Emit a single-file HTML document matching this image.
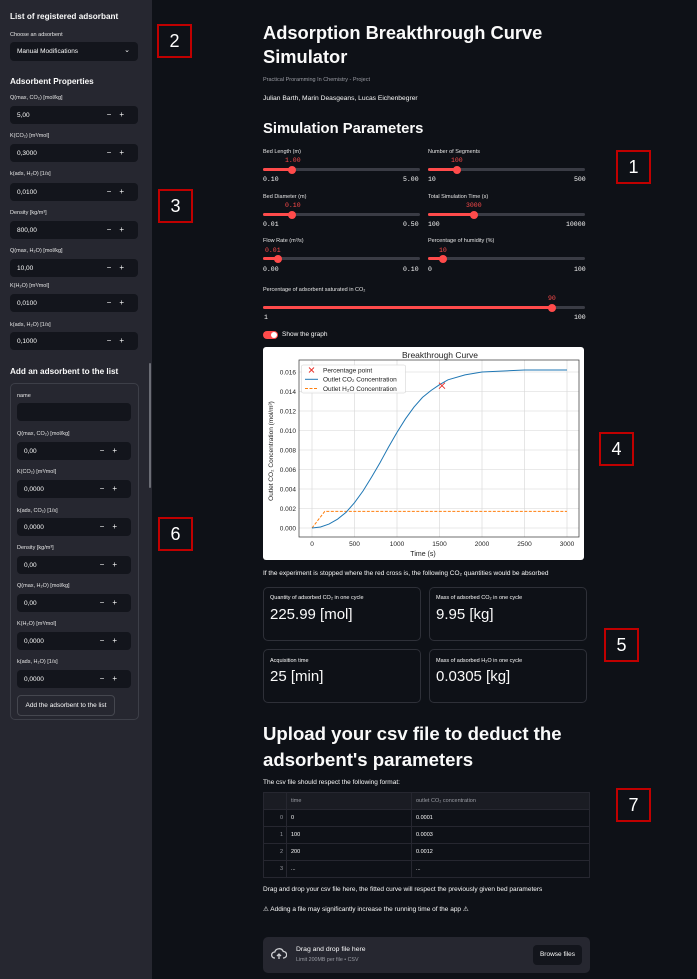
<!DOCTYPE html>
<html><head><meta charset="utf-8"><style>
*{box-sizing:border-box;margin:0;padding:0}
body{width:697px;height:979px;background:#0e1117;font-family:"Liberation Sans",sans-serif;color:#fafafa;position:relative;overflow:hidden}
.a{position:absolute;white-space:nowrap}
#sb{position:absolute;left:0;top:0;width:152px;height:979px;background:#262730}
.h{font-weight:bold;font-size:8.2px}
.l{font-size:5.5px;color:#e6e6e6}
.in{position:absolute;background:#13151c;border-radius:4px;height:18px;font-size:6.5px;color:#fafafa;padding:6px 0 0 7px}
.in .pm{position:absolute;right:6px;top:4px;font-size:8px;letter-spacing:8px}
.sl{position:absolute;height:3px;background:#3a3c45;border-radius:2px}
.sl i{position:absolute;left:0;top:0;height:3px;background:#ff4b4b;border-radius:2px}
.sl b{position:absolute;top:-2.5px;width:8px;height:8px;border-radius:50%;background:#ff4b4b;margin-left:-4px}
.v{position:absolute;font-family:"Liberation Mono",monospace;font-size:6.5px;color:#ff4b4b;white-space:nowrap}
.mm{position:absolute;font-family:"Liberation Mono",monospace;font-size:6.5px;color:#fafafa;white-space:nowrap}
.box{position:absolute;border:1px solid #2e3038;border-radius:5px}
.ann{position:absolute;width:35px;height:34px;border:2px solid #c00000;background:#0e1117;color:#fff;font-size:18px;text-align:center;line-height:30px}
td{font-size:5.5px;color:#fafafa;border-top:1px solid #262730;border-left:1px solid #262730;height:17px;padding-left:4px}
</style></head><body>
<div id="sb"></div>
<div class="a h" style="left:10px;top:12px">List of registered adsorbant</div>
<div class="a l" style="left:10px;top:32px">Choose an adsorbent</div>
<div class="in" style="left:10px;top:42px;width:128px;height:19px;padding-left:7px">Manual Modifications<span style="position:absolute;right:8px;top:4px;font-size:7px">⌄</span></div>
<div class="a h" style="left:10px;top:77px">Adsorbent Properties</div>
<div class="a l" style="left:10px;top:95px">Q(max, CO₂) [mol/kg]</div>
<div class="in" style="left:10px;top:106px;width:128px">5,00<span class="pm">−+</span></div>
<div class="a l" style="left:10px;top:133px">K(CO₂) [m³/mol]</div>
<div class="in" style="left:10px;top:144px;width:128px">0,3000<span class="pm">−+</span></div>
<div class="a l" style="left:10px;top:171px">k(ads, H₂O) [1/s]</div>
<div class="in" style="left:10px;top:183px;width:128px">0,0100<span class="pm">−+</span></div>
<div class="a l" style="left:10px;top:210px">Density [kg/m³]</div>
<div class="in" style="left:10px;top:221px;width:128px">800,00<span class="pm">−+</span></div>
<div class="a l" style="left:10px;top:248px">Q(max, H₂O) [mol/kg]</div>
<div class="in" style="left:10px;top:259px;width:128px">10,00<span class="pm">−+</span></div>
<div class="a l" style="left:10px;top:283px">K(H₂O) [m³/mol]</div>
<div class="in" style="left:10px;top:294px;width:128px">0,0100<span class="pm">−+</span></div>
<div class="a l" style="left:10px;top:322px">k(ads, H₂O) [1/s]</div>
<div class="in" style="left:10px;top:332px;width:128px">0,1000<span class="pm">−+</span></div>
<div style="position:absolute;left:149px;top:363px;width:2px;height:125px;background:#6b6d75;border-radius:1px"></div>
<div class="a h" style="left:10px;top:367px">Add an adsorbent to the list</div>
<div class="box" style="left:10px;top:383px;width:129px;height:337px;border-color:#3d3f48"></div>
<div class="a l" style="left:17px;top:393px">name</div>
<div class="in" style="left:17px;top:403px;width:114px"></div>
<div class="a l" style="left:17px;top:431px">Q(max, CO₂) [mol/kg]</div>
<div class="in" style="left:17px;top:442px;width:114px">0,00<span class="pm">−+</span></div>
<div class="a l" style="left:17px;top:469px">K(CO₂) [m³/mol]</div>
<div class="in" style="left:17px;top:480px;width:114px">0,0000<span class="pm">−+</span></div>
<div class="a l" style="left:17px;top:508px">k(ads, CO₂) [1/s]</div>
<div class="in" style="left:17px;top:518px;width:114px">0,0000<span class="pm">−+</span></div>
<div class="a l" style="left:17px;top:545px">Density [kg/m³]</div>
<div class="in" style="left:17px;top:556px;width:114px">0,00<span class="pm">−+</span></div>
<div class="a l" style="left:17px;top:583px">Q(max, H₂O) [mol/kg]</div>
<div class="in" style="left:17px;top:594px;width:114px">0,00<span class="pm">−+</span></div>
<div class="a l" style="left:17px;top:621px">K(H₂O) [m³/mol]</div>
<div class="in" style="left:17px;top:632px;width:114px">0,0000<span class="pm">−+</span></div>
<div class="a l" style="left:17px;top:659px">k(ads, H₂O) [1/s]</div>
<div class="in" style="left:17px;top:670px;width:114px">0,0000<span class="pm">−+</span></div>
<div class="a" style="left:17px;top:695px;width:98px;height:21px;border:1px solid #45474f;border-radius:4px;font-size:6.5px;text-align:center;line-height:19px;background:#262730">Add the adsorbent to the list</div>

<div class="a" style="left:263px;top:21px;font-weight:bold;font-size:18.3px;line-height:24px">Adsorption Breakthrough Curve<br>Simulator</div>
<div class="a" style="left:263px;top:77px;font-size:5.5px;color:#9a9ca3">Practical Proramming In Chemistry - Project</div>
<div class="a" style="left:263px;top:95px;font-size:6.7px">Julian Barth, Marin Deasgeans, Lucas Eichenbegrer</div>
<div class="a" style="left:263px;top:121px;font-size:14.8px;font-weight:bold">Simulation Parameters</div>

<div class="a l" style="left:263px;top:149px">Bed Length (m)</div>
<div class="v" style="left:285px;top:157px">1.00</div>
<div class="sl" style="left:263px;top:168px;width:157px"><i style="width:29px"></i><b style="left:29px"></b></div>
<div class="mm" style="left:263px;top:176px">0.10</div><div class="mm" style="left:403px;top:176px">5.00</div>
<div class="a l" style="left:428px;top:149px">Number of Segments</div>
<div class="v" style="left:451px;top:157px">100</div>
<div class="sl" style="left:428px;top:168px;width:157px"><i style="width:29px"></i><b style="left:29px"></b></div>
<div class="mm" style="left:428px;top:176px">10</div><div class="mm" style="left:574px;top:176px">500</div>

<div class="a l" style="left:263px;top:194px">Bed Diameter (m)</div>
<div class="v" style="left:285px;top:202px">0.10</div>
<div class="sl" style="left:263px;top:213px;width:157px"><i style="width:29px"></i><b style="left:29px"></b></div>
<div class="mm" style="left:263px;top:221px">0.01</div><div class="mm" style="left:403px;top:221px">0.50</div>
<div class="a l" style="left:428px;top:194px">Total Simulation Time (s)</div>
<div class="v" style="left:466px;top:202px">3000</div>
<div class="sl" style="left:428px;top:213px;width:157px"><i style="width:46px"></i><b style="left:46px"></b></div>
<div class="mm" style="left:428px;top:221px">100</div><div class="mm" style="left:566px;top:221px">10000</div>

<div class="a l" style="left:263px;top:238px">Flow Rate (m³/s)</div>
<div class="v" style="left:265px;top:247px">0.01</div>
<div class="sl" style="left:263px;top:257px;width:157px"><i style="width:15px"></i><b style="left:15px"></b></div>
<div class="mm" style="left:263px;top:266px">0.00</div><div class="mm" style="left:403px;top:266px">0.10</div>
<div class="a l" style="left:428px;top:238px">Percentage of humidity (%)</div>
<div class="v" style="left:439px;top:247px">10</div>
<div class="sl" style="left:428px;top:257px;width:157px"><i style="width:15px"></i><b style="left:15px"></b></div>
<div class="mm" style="left:428px;top:266px">0</div><div class="mm" style="left:574px;top:266px">100</div>

<div class="a l" style="left:263px;top:287px">Percentage of adsorbent saturated in CO₂</div>
<div class="v" style="left:548px;top:295px">90</div>
<div class="sl" style="left:263px;top:306px;width:322px"><i style="width:289px"></i><b style="left:289px"></b></div>
<div class="mm" style="left:264px;top:314px">1</div><div class="mm" style="left:574px;top:314px">100</div>

<div class="a" style="left:263px;top:331px;width:15px;height:8px;border-radius:4px;background:#ff4b4b"><div style="position:absolute;right:1px;top:1px;width:6px;height:6px;border-radius:50%;background:#fff"></div></div>
<div class="a" style="left:282px;top:331px;font-size:6.5px">Show the graph</div>

<svg style="position:absolute;left:263px;top:347px" width="321" height="213" viewBox="0 0 321 213" font-family="Liberation Sans,sans-serif">
<rect x="0" y="0" width="321" height="213" rx="3" fill="#fff"/>
<g stroke="#d6d6d6" stroke-width="0.6">
<line x1="49" y1="13" x2="49" y2="190"/><line x1="91.5" y1="13" x2="91.5" y2="190"/><line x1="134" y1="13" x2="134" y2="190"/><line x1="176.5" y1="13" x2="176.5" y2="190"/><line x1="219" y1="13" x2="219" y2="190"/><line x1="261.5" y1="13" x2="261.5" y2="190"/><line x1="304" y1="13" x2="304" y2="190"/>
<line x1="36" y1="181" x2="316" y2="181"/><line x1="36" y1="161.5" x2="316" y2="161.5"/><line x1="36" y1="142" x2="316" y2="142"/><line x1="36" y1="122.5" x2="316" y2="122.5"/><line x1="36" y1="103" x2="316" y2="103"/><line x1="36" y1="83.5" x2="316" y2="83.5"/><line x1="36" y1="64" x2="316" y2="64"/><line x1="36" y1="44.5" x2="316" y2="44.5"/><line x1="36" y1="25" x2="316" y2="25"/>
</g>
<rect x="36" y="13" width="280" height="177" fill="none" stroke="#333" stroke-width="0.7"/>
<polyline fill="none" stroke="#ff7f0e" stroke-width="1" stroke-dasharray="3,1.5" points="49,181 61.75,164.4 304,164.4"/>
<polyline fill="none" stroke="#1f77b4" stroke-width="1" points="49,181 57.5,180 66,177.1 74.5,172.2 83,165.4 91.5,155.7 100,144 108.5,130.3 117,115.7 125.5,100.1 134,85.4 142.5,71.8 151,60.1 159.5,50.4 168,43.5 176.5,37.7 185,32.8 202,27.9 219,25 261.5,23 304,23"/>
<path d="M176,35.7l6,6M182,35.7l-6,6" stroke="#e8302a" stroke-width="0.9"/>
<g font-size="6.5" fill="#222" text-anchor="middle">
<text x="49" y="199">0</text><text x="91.5" y="199">500</text><text x="134" y="199">1000</text><text x="176.5" y="199">1500</text><text x="219" y="199">2000</text><text x="261.5" y="199">2500</text><text x="304" y="199">3000</text>
<text x="160" y="209" font-size="7">Time (s)</text>
<text x="177" y="11" font-size="8.5">Breakthrough Curve</text>
</g>
<g font-size="6.5" fill="#222" text-anchor="end">
<text x="33" y="183.5">0.000</text><text x="33" y="164">0.002</text><text x="33" y="144.5">0.004</text><text x="33" y="125">0.006</text><text x="33" y="105.5">0.008</text><text x="33" y="86">0.010</text><text x="33" y="66.5">0.012</text><text x="33" y="47">0.014</text><text x="33" y="27.5">0.016</text>
</g>
<text transform="translate(10,104) rotate(-90)" font-size="6.5" fill="#222" text-anchor="middle">Outlet CO₂ Concentration (mol/m³)</text>
<rect x="38.5" y="18" width="104" height="28" rx="1.5" fill="#fff" fill-opacity="0.85" stroke="#ccc" stroke-width="0.5"/>
<path d="M46,20.5l5,5M51,20.5l-5,5" stroke="#e8302a" stroke-width="0.9"/>
<line x1="42" y1="32.3" x2="55" y2="32.3" stroke="#1f77b4" stroke-width="1"/>
<line x1="42" y1="41.5" x2="55" y2="41.5" stroke="#ff7f0e" stroke-width="1" stroke-dasharray="3,1.5"/>
<g font-size="6.5" fill="#222"><text x="60" y="25.5">Percentage point</text><text x="60" y="34.5">Outlet CO₂ Concentration</text><text x="60" y="44">Outlet H₂O Concentration</text></g>
</svg>

<div class="a" style="left:263px;top:570px;font-size:6.5px">If the experiment is stopped where the red cross is, the following CO₂ quantities would be absorbed</div>
<div class="box" style="left:263px;top:587px;width:158px;height:54px"></div>
<div class="box" style="left:429px;top:587px;width:158px;height:54px"></div>
<div class="box" style="left:263px;top:649px;width:158px;height:54px"></div>
<div class="box" style="left:429px;top:649px;width:158px;height:54px"></div>
<div class="a" style="left:270px;top:595px;font-size:5.5px">Quantity of adsorbed CO₂ in one cycle</div>
<div class="a" style="left:270px;top:606px;font-size:15px">225.99 [mol]</div>
<div class="a" style="left:436px;top:595px;font-size:5.5px">Mass of adsorbed CO₂ in one cycle</div>
<div class="a" style="left:436px;top:606px;font-size:15px">9.95 [kg]</div>
<div class="a" style="left:270px;top:658px;font-size:5.5px">Acquisition time</div>
<div class="a" style="left:270px;top:668px;font-size:15px">25 [min]</div>
<div class="a" style="left:436px;top:658px;font-size:5.5px">Mass of adsorbed H₂O in one cycle</div>
<div class="a" style="left:436px;top:668px;font-size:15px">0.0305 [kg]</div>

<div class="a" style="left:263px;top:721px;font-weight:bold;font-size:18.6px;line-height:26px">Upload your csv file to deduct the<br>adsorbent's parameters</div>
<div class="a" style="left:263px;top:779px;font-size:6.5px">The csv file should respect the following format:</div>
<table style="position:absolute;left:263px;top:792px;width:327px;border-collapse:collapse;border:1px solid #262730;background:#0e1117">
<tr style="background:#1a1c23"><td style="width:23px;border-left:none;border-top:none"></td><td style="width:125px;color:#9a9ca3;border-top:none">time</td><td style="color:#9a9ca3;border-top:none">outlet CO₂ concentration</td></tr>
<tr><td style="text-align:right;padding-right:3px;color:#9a9ca3;border-left:none">0</td><td>0</td><td>0.0001</td></tr>
<tr><td style="text-align:right;padding-right:3px;color:#9a9ca3;border-left:none">1</td><td>100</td><td>0.0003</td></tr>
<tr><td style="text-align:right;padding-right:3px;color:#9a9ca3;border-left:none">2</td><td>200</td><td>0.0012</td></tr>
<tr><td style="text-align:right;padding-right:3px;color:#9a9ca3;border-left:none">3</td><td>...</td><td>...</td></tr>
</table>
<div class="a" style="left:263px;top:886px;font-size:6.5px">Drag and drop your csv file here, the fitted curve will respect the previously given bed parameters</div>
<div class="a" style="left:263px;top:905px;font-size:6.5px">⚠ Adding a file may significantly increase the running time of the app ⚠</div>
<div class="a" style="left:263px;top:937px;width:327px;height:36px;background:#262730;border-radius:5px"></div>
<svg style="position:absolute;left:271px;top:947px" width="16" height="14" viewBox="0 0 16 14"><path d="M4,11H3.5A3,3 0 0 1 3.8,5 A4.5,4.5 0 0 1 12.3,4.5 A3.2,3.2 0 0 1 12.5,11H12" fill="none" stroke="#cfd0d4" stroke-width="1.3"/><path d="M8,12V7M6,9l2-2 2,2" fill="none" stroke="#cfd0d4" stroke-width="1.3"/></svg>
<div class="a" style="left:296px;top:946px;font-size:6.8px">Drag and drop file here</div>
<div class="a" style="left:296px;top:957px;font-size:5.3px;color:#9a9ca3">Limit 200MB per file • CSV</div>
<div class="a" style="left:533px;top:945px;width:49px;height:20px;background:#13151c;border-radius:4px;font-size:6.5px;text-align:center;line-height:20px">Browse files</div>

<div class="ann" style="left:616px;top:150px">1</div>
<div class="ann" style="left:157px;top:24px">2</div>
<div class="ann" style="left:158px;top:189px">3</div>
<div class="ann" style="left:599px;top:432px">4</div>
<div class="ann" style="left:604px;top:628px">5</div>
<div class="ann" style="left:158px;top:517px">6</div>
<div class="ann" style="left:616px;top:788px">7</div>
</body></html>
